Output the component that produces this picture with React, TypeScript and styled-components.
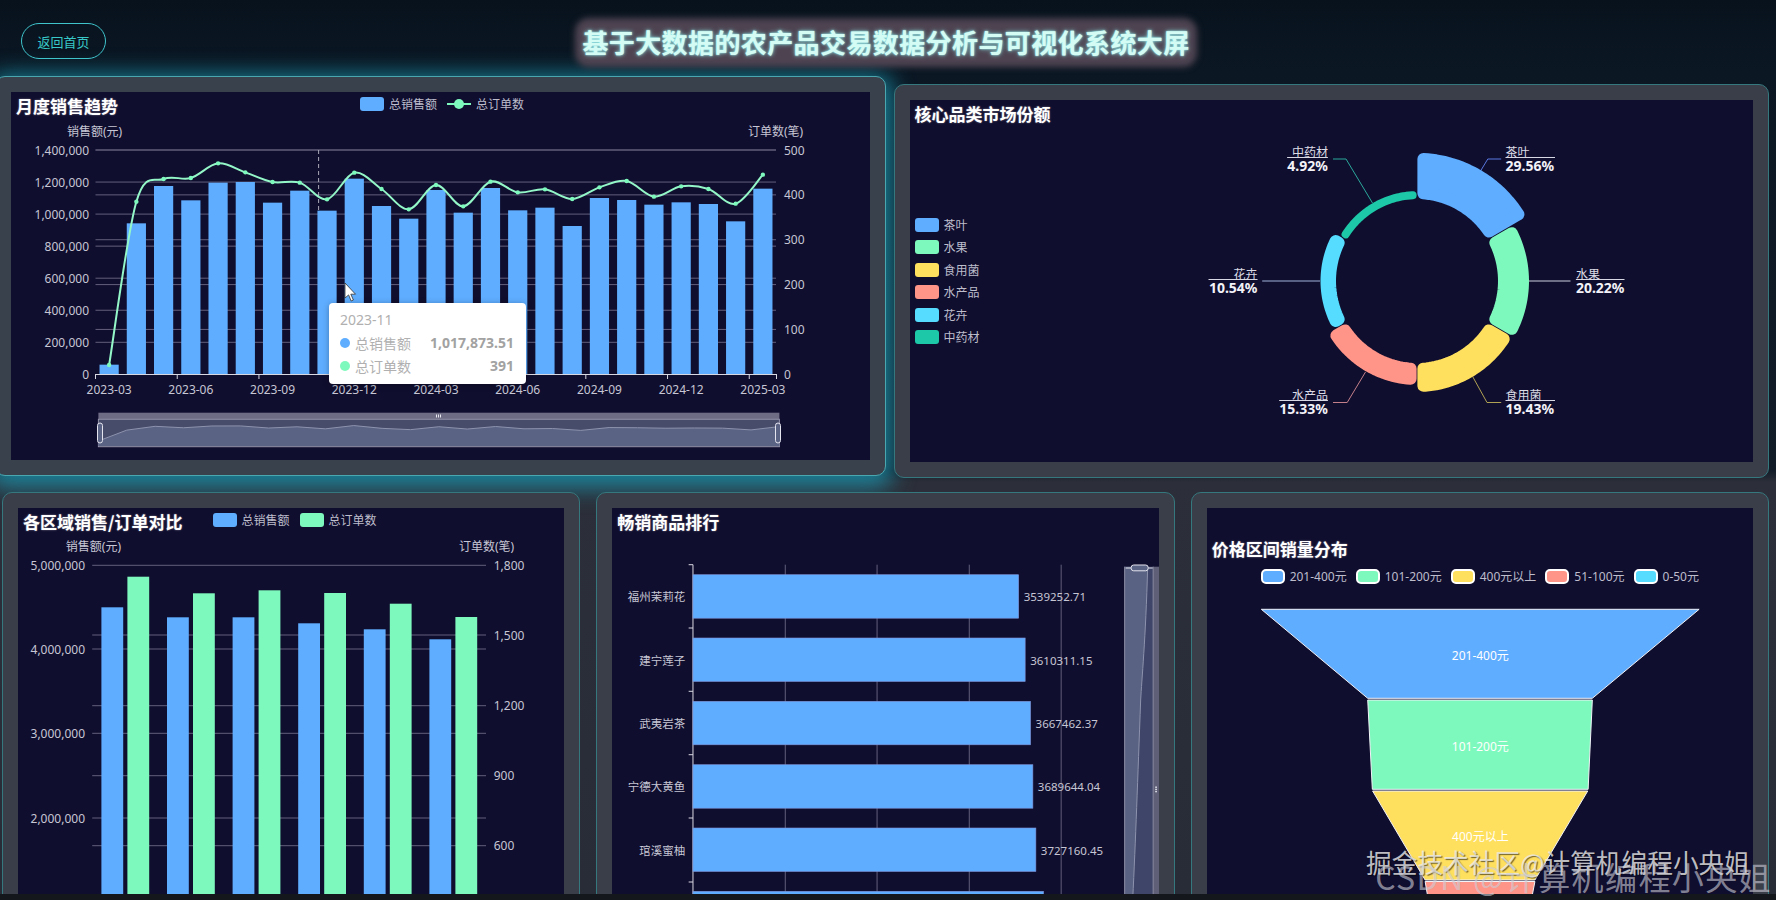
import React from "react";
import styled, { createGlobalStyle } from "styled-components";

const BLUE = "#5fadff";
const GREEN = "#7ef9bd";
const YELLOW = "#ffdf5e";
const SALMON = "#ff9488";
const CYAN = "#55dcff";
const TEAL = "#1cc8a8";
const GRID = "#625f7c";
const AXIS_TEXT = "#c6c6d4";

const GlobalStyle = createGlobalStyle`
  html, body { margin: 0; padding: 0; background: #08131f; }
  * { box-sizing: border-box; }
  body { font-family: "Noto Sans", "Noto Sans CJK SC", sans-serif; }
`;

const Shell = styled.div`
  position: relative;
  width: 1776px;
  height: 900px;
  overflow: hidden;
  background: #14181d;
`;

const Screen = styled.div`
  height: 894px;
  overflow: hidden;
  background: linear-gradient(180deg, #07121d 0, #0b1723 70px, #121c28 470px, #2c2f39 482px, #272c36 894px);
`;

const Header = styled.header`
  position: relative;
  z-index: 2;
  display: grid;
  grid-template-columns: 1fr auto 1fr;
  align-items: center;
  height: 84px;
  padding: 0 25px 2px 21px;
`;

const BackButton = styled.button`
  justify-self: start;
  width: 85px;
  height: 36px;
  border: 1.5px solid #3fc4cc;
  border-radius: 18px;
  background: transparent;
  color: #38c8c8;
  font: 13px "Noto Sans CJK SC", sans-serif;
`;

const BigTitle = styled.h1`
  position: relative;
  margin: 0;
  color: #d4fbf4;
  font: bold 26px "Noto Sans CJK SC", sans-serif;
  letter-spacing: 0.4px;
  text-shadow: 0 0 2px #a0ffff, 0 0 5px rgba(150, 255, 250, 0.7);
  isolation: isolate;

  &::before {
    content: "";
    position: absolute;
    inset: -5px -7px -7px -7px;
    z-index: -1;
    border-radius: 14px;
    background: #4e4351;
    filter: blur(3px);
  }
`;

const Row = styled.div<{ $cols: number; $height: number }>`
  display: grid;
  grid-template-columns: repeat(${(p) => p.$cols}, 1fr);
  height: ${(p) => p.$height}px;
  gap: 16px;
  margin: 0 7px 15px 2px;
`;

const Panel = styled.section<{ $raised?: boolean }>`
  position: relative;
  z-index: 1;
  min-width: 0;
  padding: 15px;
  border: 1px solid ${(p) => (p.$raised ? "#4aa7b0" : "#35787e")};
  border-radius: 10px;
  background: ${(p) => (p.$raised ? "#39424c" : "#3a3e49")};
  ${(p) =>
    p.$raised &&
    `
    z-index: 0;
    margin: -8px -8.5px 2px -7px;
    box-shadow: 0 5px 22px 7px rgba(28, 150, 175, 0.8);
  `}
`;

const Card = styled.div`
  position: relative;
  display: flex;
  flex-direction: column;
  height: 100%;
  overflow: hidden;
  background: #100e2e;
`;

const CardHead = styled.div<{ $top?: number }>`
  display: flex;
  flex: none;
  align-items: flex-start;
  height: ${(p) => 28 + (p.$top || 0)}px;
  padding: ${(p) => p.$top || 0}px 0 0 5px;
`;

const CardTitle = styled.h2`
  margin: 0;
  color: #fff;
  font: bold 17px/28px "Noto Sans CJK SC", sans-serif;
  white-space: nowrap;
  text-shadow: 0 0 2px rgba(255, 255, 255, 0.45);
`;

const LegendRow = styled.div<{ $offset?: number; $centered?: boolean }>`
  display: flex;
  flex: none;
  gap: ${(p) => (p.$centered ? 9 : 10)}px;
  margin-top: ${(p) => (p.$centered ? 6 : 5)}px;
  margin-left: ${(p) => p.$offset || 0}px;
  justify-content: ${(p) => (p.$centered ? "center" : "flex-start")};
`;

const LegendColumn = styled.div`
  display: flex;
  flex: none;
  flex-direction: column;
  justify-content: center;
  gap: 8.6px;
  width: 100px;
  padding: 0 0 28px 5px;
`;

const LegendItem = styled.div`
  display: flex;
  align-items: center;
  gap: 5px;
  height: 14px;
  color: #bdbdcc;
  font-size: 12px;
  white-space: nowrap;
`;

const Swatch = styled.span<{ $color: string; $outlined?: boolean }>`
  flex: none;
  width: 24px;
  height: ${(p) => (p.$outlined ? 15 : 14)}px;
  border: ${(p) => (p.$outlined ? "2px solid #fff" : "none")};
  border-radius: ${(p) => (p.$outlined ? 5 : 3)}px;
  background: ${(p) => p.$color};
`;

const DonutBody = styled.div`
  display: flex;
  flex: 1;
  min-height: 0;
`;

const ChartSvg = styled.svg`
  display: block;
  flex: none;
`;

const AxisText = styled.text<{ $fs?: number }>`
  fill: ${AXIS_TEXT};
  font-size: ${(p) => p.$fs || 12}px;
  dominant-baseline: central;
`;

const PieName = styled.text`
  fill: #dcdce6;
  font-size: 12px;
  dominant-baseline: central;
`;

const PieValue = styled.text`
  fill: #f2f2f8;
  font-size: 14px;
  font-weight: 700;
  dominant-baseline: central;
`;

const FunnelLabel = styled.text`
  fill: #fff;
  font-size: 12px;
  text-anchor: middle;
  dominant-baseline: central;
`;

const Tooltip = styled.div`
  position: absolute;
  left: 318px;
  top: 211px;
  width: 197px;
  height: 81px;
  padding: 8px 12px 0 11px;
  border-radius: 4px;
  background: #fff;
  box-shadow: 0 1px 6px rgba(0, 0, 0, 0.3);
  color: #b0b0b0;
  font-size: 14px;
`;

const TipDate = styled.div`
  height: 20px;
  line-height: 18px;
`;

const TipRow = styled.div`
  display: flex;
  align-items: center;
  height: 23px;
`;

const TipDot = styled.span<{ $color: string }>`
  width: 10px;
  height: 10px;
  margin-right: 5px;
  border-radius: 50%;
  background: ${(p) => p.$color};
`;

const TipValue = styled.b`
  margin-left: auto;
  color: #a2a2a2;
  font-weight: 700;
`;

const Watermark = styled.div<{ $bottom: number; $size: number; $faint?: boolean }>`
  position: absolute;
  right: ${(p) => (p.$faint ? 4 : 26)}px;
  bottom: ${(p) => p.$bottom}px;
  z-index: 3;
  color: ${(p) => (p.$faint ? "rgba(205, 205, 215, 0.62)" : "rgba(238, 238, 238, 0.8)")};
  font: ${(p) => p.$size}px/1 "Noto Sans CJK SC", sans-serif;
  letter-spacing: ${(p) => (p.$faint ? 1.4 : 0)}px;
  white-space: nowrap;
  text-shadow: ${(p) => (p.$faint ? "none" : "1px 1px 1px rgba(0, 0, 0, 0.55)")};
`;

// svg whose viewBox is given in page pixels
const Plot = ({ x, y, w, h, children }: { x: number; y: number; w: number; h: number; children: React.ReactNode }) => (
  <ChartSvg viewBox={`${x} ${y} ${w} ${h}`} width={w} height={h}>
    {children}
  </ChartSvg>
);

const smooth = (pts: number[][]) => {
  let d = `M${pts[0][0]} ${pts[0][1]}`;
  for (let i = 0; i < pts.length - 1; i++) {
    const p0 = pts[Math.max(i - 1, 0)];
    const p1 = pts[i];
    const p2 = pts[i + 1];
    const p3 = pts[Math.min(i + 2, pts.length - 1)];
    const c1x = p1[0] + (p2[0] - p0[0]) / 6;
    const c1y = p1[1] + (p2[1] - p0[1]) / 6;
    const c2x = p2[0] - (p3[0] - p1[0]) / 6;
    const c2y = p2[1] - (p3[1] - p1[1]) / 6;
    d += ` C${c1x} ${c1y} ${c2x} ${c2y} ${p2[0]} ${p2[1]}`;
  }
  return d;
};

/* 月度销售趋势 */
const MONTH_BAR_TOPS = [1094, 670, 558, 601, 548, 546, 608, 572, 632, 536, 618, 656, 570, 638, 564, 631, 623, 678, 594, 600, 614, 607, 612, 664, 566];
const MONTH_LINE = [1095, 605, 537, 534, 490, 517, 546, 548, 598, 518, 567, 628, 555, 619, 545, 577, 568, 597, 562, 543, 590, 559, 567, 611, 524];
const LEFT_TICKS = ["1,400,000", "1,200,000", "1,000,000", "800,000", "600,000", "400,000", "200,000", "0"];
const RIGHT_TICKS = ["500", "400", "300", "200", "100", "0"];
const XLABELS = ["2023-03", "2023-06", "2023-09", "2023-12", "2024-03", "2024-06", "2024-09", "2024-12", "2025-03"];
const catX = (i: number) => 94.5 + 27.24 * (i + 0.5);

const MonthlyChart = () => {
  const linePts = MONTH_LINE.map((v, i) => [catX(i), v / 3]);
  const shadowPts = MONTH_BAR_TOPS.map((v, i) => [97.4 + (681 / 24) * i, i === 0 ? 441 : 445.5 - ((374 - v / 3) / 196) * 20]);
  const shadowLine = "M" + shadowPts.map((p) => p.join(" ")).join(" L");
  return (
    <Plot x={10} y={120} w={861} h={340}>
      <AxisText x={66} y={131}>销售额(元)</AxisText>
      <AxisText x={747} y={131}>订单数(笔)</AxisText>
      {LEFT_TICKS.map((t, i) => {
        const y = 150 + i * 32.05;
        return (
          <g key={t}>
            {i < 7 && <line x1={94.5} x2={775} y1={y} y2={y} stroke={GRID} />}
            <AxisText x={88} y={y} textAnchor="end">{t}</AxisText>
          </g>
        );
      })}
      {RIGHT_TICKS.map((t, i) => {
        const y = 150 + i * 44.86;
        return (
          <g key={t}>
            {i < 5 && <line x1={94.5} x2={775} y1={y} y2={y} stroke={GRID} />}
            <AxisText x={783} y={y}>{t}</AxisText>
          </g>
        );
      })}
      <line x1={317.6} x2={317.6} y1={150} y2={211} stroke="#a8a8b8" strokeDasharray="4 3" />
      {MONTH_BAR_TOPS.map((v, i) => (
        <rect key={i} x={catX(i) - 9.6} y={v / 3} width={19.2} height={374.3 - v / 3} fill={BLUE} />
      ))}
      <line x1={94.5} x2={775} y1={374.5} y2={374.5} stroke="#d8d8e2" />
      {[0, 3, 6, 9, 12, 15, 18, 21, 24, 25].map((i) => (
        <line key={i} x1={94.5 + i * 27.24} x2={94.5 + i * 27.24} y1={374} y2={379} stroke="#d8d8e2" />
      ))}
      {XLABELS.map((t, i) => (
        <AxisText key={t} x={catX(i * 3)} y={389} textAnchor="middle">{t}</AxisText>
      ))}
      <path d={smooth(linePts)} fill="none" stroke="#93f7c8" strokeWidth={2} />
      {linePts.map((p, i) => (
        <circle key={i} cx={p[0]} cy={p[1]} r={2.2} fill={GREEN} />
      ))}
      <path d="M344 283 v15 l3.6 -3.1 2.6 6.1 2.2 -1 -2.6 -5.8 h4.7 z" fill="#fff" stroke="#333" strokeWidth={0.8} />

      <rect x={97.4} y={412.7} width={681} height={6.6} fill="#6e6c85" />
      <rect x={435} y={414.5} width={1} height={3} fill="#e8e8f0" />
      <rect x={437} y={414.5} width={1} height={3} fill="#e8e8f0" />
      <rect x={439} y={414.5} width={1} height={3} fill="#e8e8f0" />
      <rect x={97.4} y={419.3} width={681} height={27.4} fill="#474c6b" stroke="#9493ab" />
      <path d={`${shadowLine} L778.4 446 L97.4 446 Z`} fill="#5a6384" />
      <path d={shadowLine} fill="none" stroke="#8d93ad" />
      <rect x={96.5} y={423} width={5} height={20} rx={2.5} fill="#5a6384" stroke="#e4e4ee" />
      <rect x={774.5} y={423} width={5} height={20} rx={2.5} fill="#5a6384" stroke="#e4e4ee" />
    </Plot>
  );
};

/* 核心品类市场份额 */
const CX = 1416.5;
const CY = 281;
const KY = 1.01;
const INNER = 81;
const polar = (deg: number, r: number) => {
  const a = (deg * Math.PI) / 180;
  return `${(CX + r * Math.sin(a)).toFixed(2)} ${(CY - KY * r * Math.cos(a)).toFixed(2)}`;
};

const roseRound = (outer: number) => Math.min(6, (outer - INNER) / 2 - 0.3);

const roseSlice = (from: number, to: number, outer: number) => {
  const round = roseRound(outer);
  const r0 = INNER + round;
  const r1 = outer - round;
  const inset = (r: number) => ((round + 0.4) / r) * (180 / Math.PI);
  const pts: string[] = [];
  for (let a = from + inset(r1); a <= to - inset(r1); a += 2) pts.push(polar(a, r1));
  pts.push(polar(to - inset(r1), r1));
  for (let a = to - inset(r0); a >= from + inset(r0); a -= 2) pts.push(polar(a, r0));
  pts.push(polar(from + inset(r0), r0));
  return "M" + pts.join(" L") + " Z";
};

const SLICES = [
  { name: "茶叶", color: BLUE, r: 127 },
  { name: "水果", color: GREEN, r: 112 },
  { name: "食用菌", color: YELLOW, r: 110 },
  { name: "水产品", color: SALMON, r: 103 },
  { name: "花卉", color: CYAN, r: 96.5 },
  { name: "中药材", color: TEAL, r: 89 },
];

const PIE_LABELS = [
  { name: "茶叶", value: "29.56%", x: 1505, x2: 1554.5, y: 157.5, side: "start", line: "1480,171 1487.3,159 1500.7,159", color: "#5878e0" },
  { name: "水果", value: "20.22%", x: 1575.4, x2: 1624, y: 279.5, side: "start", line: "1528,281 1570,281", color: "#c8d0dc" },
  { name: "食用菌", value: "19.43%", x: 1505, x2: 1554.5, y: 400.5, side: "start", line: "1472.4,377 1486.5,402.5 1500.7,402.5", color: "#b0a253" },
  { name: "水产品", value: "15.33%", x: 1327.4, x2: 1278.7, y: 400.5, side: "end", line: "1365,372 1346.7,402.5 1332.5,402.5", color: "#c4808a" },
  { name: "花卉", value: "10.54%", x: 1257, x2: 1208, y: 279.5, side: "end", line: "1319.5,281 1261.7,281", color: "#9fb4d8" },
  { name: "中药材", value: "4.92%", x: 1327.4, x2: 1286.6, y: 157.5, side: "end", line: "1372,203 1345.5,159 1332.5,159", color: "#2aa89a" },
];

const DonutChart = () => (
  <Plot x={1009.5} y={128} w={744} h={333}>
    {PIE_LABELS.map((l) => (
      <g key={l.name}>
        <polyline points={l.line} fill="none" stroke={l.color} />
        <line x1={l.x} x2={l.x2} y1={l.y} y2={l.y} stroke="#d8d8e4" />
        <PieName x={l.x} y={l.y - 5} textAnchor={l.side as "start" | "end"}>{l.name}</PieName>
        <PieValue x={l.x} y={l.y + 8} textAnchor={l.side as "start" | "end"}>{l.value}</PieValue>
      </g>
    ))}
    {SLICES.map((s, i) => (
      <path key={s.name} d={roseSlice(i * 60, (i + 1) * 60, s.r)} fill={s.color} stroke={s.color} strokeWidth={roseRound(s.r) * 2} strokeLinejoin="round" />
    ))}
  </Plot>
);

/* 各区域销售/订单对比 */
const REGION_BLUE = [607.3, 617.3, 617.3, 623.3, 629.3, 639.3];
const REGION_GREEN = [576.7, 593.3, 590.3, 593, 603.7, 617];
const RegionChart = () => (
  <Plot x={18} y={536} w={547} h={360}>
    <AxisText x={65.8} y={546}>销售额(元)</AxisText>
    <AxisText x={459} y={546}>订单数(笔)</AxisText>
    {[565.3, 635, 649, 705.7, 733.3, 775.7, 818, 845.7].map((y) => (
      <line key={y} x1={92.2} x2={486} y1={y} y2={y} stroke={GRID} />
    ))}
    {["5,000,000", "4,000,000", "3,000,000", "2,000,000"].map((t, i) => (
      <AxisText key={t} x={85} y={565.3 + i * 84.3} textAnchor="end">{t}</AxisText>
    ))}
    {["1,800", "1,500", "1,200", "900", "600"].map((t, i) => (
      <AxisText key={t} x={493.7} y={565.3 + i * 70.1}>{t}</AxisText>
    ))}
    {REGION_BLUE.map((top, i) => (
      <rect key={i} x={101.4 + i * 65.6} y={top} width={21.8} height={900 - top} fill={BLUE} />
    ))}
    {REGION_GREEN.map((top, i) => (
      <rect key={i} x={127.4 + i * 65.6} y={top} width={21.8} height={900 - top} fill={GREEN} />
    ))}
  </Plot>
);

/* 畅销商品排行 */
const RANK = [
  { name: "福州茉莉花", value: "3539252.71", end: 1019, top: 574.7 },
  { name: "建宁莲子", value: "3610311.15", end: 1025.5, top: 638 },
  { name: "武夷岩茶", value: "3667462.37", end: 1030.9, top: 701.3 },
  { name: "宁德大黄鱼", value: "3689644.04", end: 1033.2, top: 764.7 },
  { name: "琯溪蜜柚", value: "3727160.45", end: 1036.2, top: 828 },
  { name: "", value: "", end: 1043.9, top: 891.3 },
];

const RankChart = () => (
  <Plot x={612.33} y={536} w={548} h={360}>
    {[785.6, 877.4, 969.6, 1061.5].map((x) => (
      <line key={x} x1={x} x2={x} y1={564.7} y2={896} stroke={GRID} />
    ))}
    {[564.7, 628, 691.3, 754.7, 818, 882].map((y) => (
      <line key={y} x1={689} x2={693.3} y1={y} y2={y} stroke="#d8d8e2" />
    ))}
    <line x1={693.3} x2={693.3} y1={564.7} y2={896} stroke="#d8d8e2" />
    {RANK.map((r) => (
      <g key={r.top}>
        <rect x={693.3} y={r.top} width={r.end - 693.3} height={43.5} fill={BLUE} stroke="#7d92d8" strokeWidth={0.6} />
        {r.name && <AxisText $fs={11.5} x={685.7} y={r.top + 22} textAnchor="end">{r.name}</AxisText>}
        {r.value && <AxisText $fs={11.5} x={r.end + 5} y={r.top + 22}>{r.value}</AxisText>}
      </g>
    ))}
    <rect x={1125} y={566.7} width={28.5} height={330} fill="#3f4568" />
    <path d="M1125 566.7 H1148 C1146 640 1142 680 1141 700 C1138 780 1136 840 1133 900 H1125 Z" fill="#596282" />
    <path d="M1148 566.7 C1146 640 1142 680 1141 700 C1138 780 1136 840 1133 900" fill="none" stroke="#8d93ad" />
    <rect x={1153.5} y={566.7} width={8} height={330} fill="#5f5f78" />
    <line x1={1125} x2={1125} y1={566.7} y2={896} stroke="#8c8ca4" />
    <line x1={1153.5} x2={1153.5} y1={566.7} y2={896} stroke="#8c8ca4" />
    <line x1={1126} x2={1153} y1={568} y2={568} stroke="#e4e4ee" />
    <rect x={1131.5} y={565} width={17} height={5.8} rx={2.5} fill="#5a6384" stroke="#e4e4ee" />
    <rect x={1155.6} y={786.5} width={1.6} height={1.4} fill="#e8e8f0" />
    <rect x={1155.6} y={788.7} width={1.6} height={1.4} fill="#e8e8f0" />
    <rect x={1155.6} y={790.9} width={1.6} height={1.4} fill="#e8e8f0" />
  </Plot>
);

/* 价格区间销量分布 */
const FUNNEL = [
  { label: "201-400元", color: BLUE, points: "1261,609.3 1698.8,609.3 1592,698.3 1367.4,698.3", y: 655 },
  { label: "101-200元", color: GREEN, points: "1367.4,700 1592,700 1587.8,789.3 1372,789.3", y: 746 },
  { label: "400元以上", color: YELLOW, points: "1372.3,791 1587.4,791 1534.6,880 1424.8,880", y: 836 },
  { label: "51-100元", color: SALMON, points: "1424.8,881.5 1534.6,881.5 1531,900 1428,900", y: 0 },
];

const FunnelChart = () => (
  <Plot x={1206.67} y={583} w={547} h={313}>
    {FUNNEL.map((f) => (
      <g key={f.label}>
        <polygon points={f.points} fill={f.color} stroke="#f2f2f8" strokeWidth={1} />
        {f.y > 0 && <FunnelLabel x={1480} y={f.y}>{f.label}</FunnelLabel>}
      </g>
    ))}
  </Plot>
);

const PriceLegend = [
  { name: "201-400元", color: BLUE },
  { name: "101-200元", color: GREEN },
  { name: "400元以上", color: YELLOW },
  { name: "51-100元", color: SALMON },
  { name: "0-50元", color: CYAN },
];

const SalesLegendMark = () => (
  <svg width="24" height="14" viewBox="0 0 24 14">
    <line x1="0" x2="24" y1="7" y2="7" stroke={GREEN} strokeWidth="2" />
    <circle cx="12" cy="7" r="5" fill={GREEN} />
  </svg>
);

export default function App() {
  return (
    <Shell>
      <GlobalStyle />
      <Screen>
        <Header>
          <BackButton>返回首页</BackButton>
          <BigTitle>基于大数据的农产品交易数据分析与可视化系统大屏</BigTitle>
        </Header>

        <Row $cols={2} $height={393}>
          <Panel $raised>
            <Card>
              <CardHead>
                <CardTitle>月度销售趋势</CardTitle>
                <LegendRow $offset={242}>
                  <LegendItem><Swatch $color={BLUE} />总销售额</LegendItem>
                  <LegendItem><SalesLegendMark />总订单数</LegendItem>
                </LegendRow>
              </CardHead>
              <MonthlyChart />
              <Tooltip>
                <TipDate>2023-11</TipDate>
                <TipRow><TipDot $color={BLUE} />总销售额<TipValue>1,017,873.51</TipValue></TipRow>
                <TipRow><TipDot $color={GREEN} />总订单数<TipValue>391</TipValue></TipRow>
              </Tooltip>
            </Card>
          </Panel>
          <Panel>
            <Card>
              <CardHead>
                <CardTitle>核心品类市场份额</CardTitle>
              </CardHead>
              <DonutBody>
                <LegendColumn>
                  {SLICES.map((s) => (
                    <LegendItem key={s.name}><Swatch $color={s.color} />{s.name}</LegendItem>
                  ))}
                </LegendColumn>
                <DonutChart />
              </DonutBody>
            </Card>
          </Panel>
        </Row>

        <Row $cols={3} $height={480}>
          <Panel>
            <Card>
              <CardHead>
                <CardTitle>各区域销售/订单对比</CardTitle>
                <LegendRow $offset={30}>
                  <LegendItem><Swatch $color={BLUE} />总销售额</LegendItem>
                  <LegendItem><Swatch $color={GREEN} />总订单数</LegendItem>
                </LegendRow>
              </CardHead>
              <RegionChart />
            </Card>
          </Panel>
          <Panel>
            <Card>
              <CardHead>
                <CardTitle>畅销商品排行</CardTitle>
              </CardHead>
              <RankChart />
            </Card>
          </Panel>
          <Panel>
            <Card>
              <CardHead $top={27}>
                <CardTitle>价格区间销量分布</CardTitle>
              </CardHead>
              <LegendRow $centered>
                {PriceLegend.map((l) => (
                  <LegendItem key={l.name}><Swatch $color={l.color} $outlined />{l.name}</LegendItem>
                ))}
              </LegendRow>
              <FunnelChart />
            </Card>
          </Panel>
        </Row>
      </Screen>
      <Watermark $bottom={25} $size={25.7}>掘金技术社区@计算机编程小央姐</Watermark>
      <Watermark $bottom={8} $size={32} $faint>CSDN @计算机编程小央姐</Watermark>
    </Shell>
  );
}
